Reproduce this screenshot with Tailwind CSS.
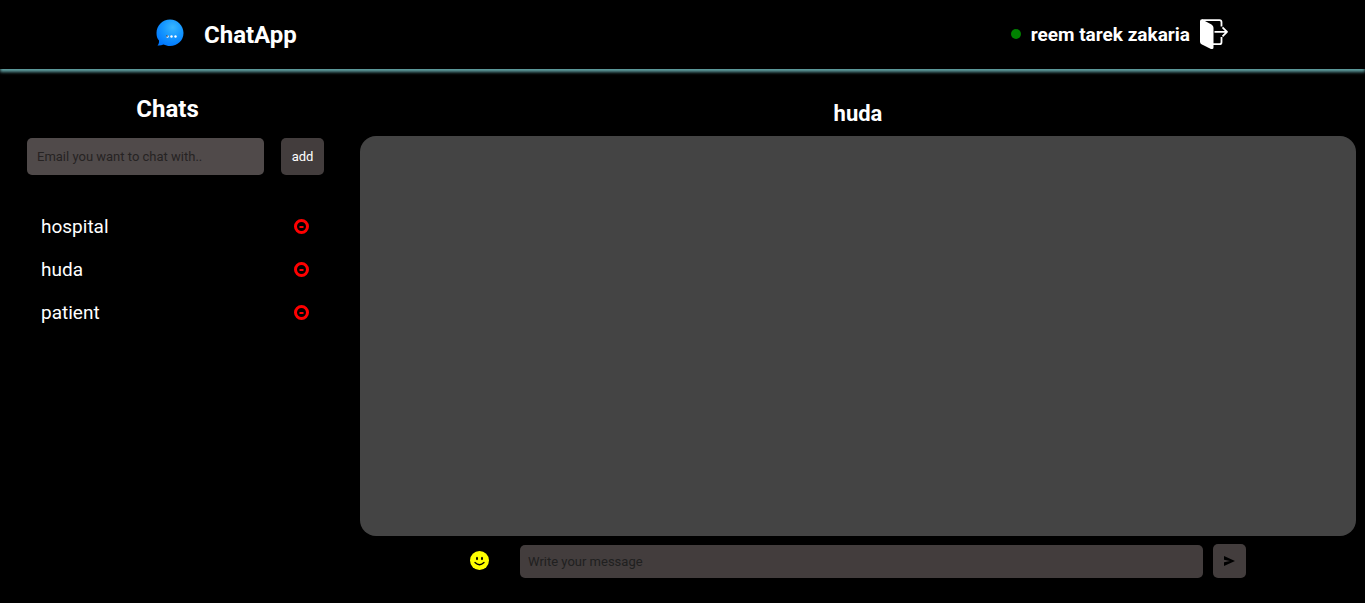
<!DOCTYPE html>
<html lang="en">
<head>
<meta charset="utf-8">
<meta name="viewport" content="width=device-width, initial-scale=1">
<title>ChatApp</title>
<script src="https://cdn.jsdelivr.net/npm/@tailwindcss/browser@4"></script>
</head>
<body class="flex min-h-screen flex-col bg-black font-[Roboto,sans-serif] text-white">
<header class="flex h-[69px] shrink-0 items-center justify-between pr-[137px] pl-[156px] shadow-[0_3px_3px_#5f9ea0]">
  <a href="#" class="flex items-center gap-5">
    <svg class="mb-1 size-7" viewBox="0 0 28 28" aria-hidden="true">
      <defs><radialGradient id="bubble" cx=".6" cy=".3" r=".75"><stop offset="0" stop-color="#38b6ff"/><stop offset=".5" stop-color="#1496ff"/><stop offset="1" stop-color="#0077ff"/></radialGradient></defs>
      <path fill="url(#bubble)" d="M14 .5C21.500 .5 27.500 6.500 27.500 14S21.500 27 14 27c-2.500 0-4.500-.6-6.500-1.500-1.700.8-3.700 1.200-6 1 1.200-1.200 1.700-3 1.500-5C1.200 19.500.5 17 .5 14 .5 6.500 6.500.5 14 .5Z"/>
      <g fill="#fff"><circle cx="11.500" cy="17.500" r="1.200"/><circle cx="15.500" cy="17.500" r="1.200"/><circle cx="19.500" cy="17.500" r="1.200"/></g><circle cx="11" cy="17" r=".8" fill="#012"/>
    </svg>
    <span class="text-2xl font-bold">ChatApp</span>
  </a>
  <div class="flex items-center">
    <span class="mr-[10px] mb-px size-[10px] rounded-full bg-[#008000]"></span>
    <span class="mr-[10px] text-[19px] leading-[30px] font-bold">reem tarek zakaria</span>
    <button type="button" aria-label="Log out" class="mb-px">
      <svg class="h-[31px] w-7" viewBox="0 0 28 31" fill="none" stroke="#fff" stroke-width="1.800" stroke-linejoin="round" aria-hidden="true">
        <path d="M2 1.200h17.500q2 0 2 2v4.300M21.500 18v5.200q0 2-2 2H13"/>
        <path d="M14.500 12.800H27M22.500 8.300l4.500 4.500-4.500 4.500"/>
        <path fill="#fff" stroke="none" d="M0 2.300Q0 .3 2 .3L4.500 1.700 11.500 5.500Q13.500 6.700 13.500 8.700V28.500Q13.500 30.700 11 29.900L1.500 25.200Q0 24.200 0 22.700Z"/>
      </svg>
    </button>
  </div>
</header>
<main class="flex flex-1">
  <aside class="w-[335px] shrink-0 pt-6 pr-[11px] pl-[27px]">
    <h1 class="mr-4 text-center text-2xl font-bold">Chats</h1>
    <form class="mt-[13px] flex gap-[17px]">
      <input type="email" aria-label="Email you want to chat with" placeholder="Email you want to chat with.." class="h-[37px] min-w-0 flex-1 rounded-[5px] bg-[#504a4a] px-[10px] text-[13px] outline-none placeholder:text-[#262323]">
      <button type="button" class="h-[37px] w-[43px] rounded-[5px] bg-[#433d3d] text-[13px]">add</button>
    </form>
    <ul class="mt-[30px] pr-[15px] pl-[14px] text-[19px] leading-[31px]">
      <li class="flex h-[43px] items-center justify-between"><a href="#">hospital</a><button type="button" aria-label="Remove hospital"><svg class="size-[15px]" viewBox="0 0 15 15" aria-hidden="true"><circle cx="7.500" cy="7.500" r="6" fill="none" stroke="red" stroke-width="3"/><path stroke="red" stroke-width="2" d="M5.500 8h4"/></svg></button></li>
      <li class="flex h-[43px] items-center justify-between"><a href="#">huda</a><button type="button" aria-label="Remove huda"><svg class="size-[15px]" viewBox="0 0 15 15" aria-hidden="true"><circle cx="7.500" cy="7.500" r="6" fill="none" stroke="red" stroke-width="3"/><path stroke="red" stroke-width="2" d="M5.500 8h4"/></svg></button></li>
      <li class="flex h-[43px] items-center justify-between"><a href="#">patient</a><button type="button" aria-label="Remove patient"><svg class="size-[15px]" viewBox="0 0 15 15" aria-hidden="true"><circle cx="7.500" cy="7.500" r="6" fill="none" stroke="red" stroke-width="3"/><path stroke="red" stroke-width="2" d="M5.500 8h4"/></svg></button></li>
    </ul>
  </aside>
  <section class="flex min-w-0 flex-1 flex-col pt-[30px] pr-[9px] pb-[25px] pl-[25px]">
    <h2 class="text-center text-[22px] leading-[30px] font-bold">huda</h2>
    <div class="mt-[7px] min-h-[300px] flex-1 rounded-[16px] bg-[#444]"></div>
    <form class="mt-2 flex items-center px-[110px]">
      <button type="button" aria-label="Choose an emoji" class="mr-[31px] mb-0.5">
        <svg class="size-[19px]" viewBox="0 0 19 19" aria-hidden="true"><circle cx="9.500" cy="9.500" r="9.500" fill="#ff0"/><g fill="#000"><ellipse cx="7" cy="7.500" rx="1" ry="1.700"/><ellipse cx="12" cy="7.500" rx="1" ry="1.700"/></g><path d="M5 11.500q4.500 4.500 9 0" fill="none" stroke="#000" stroke-width="1.300" stroke-linecap="round"/></svg>
      </button>
      <input type="text" aria-label="Write your message" placeholder="Write your message" class="h-[33px] min-w-0 flex-1 rounded-[5px] bg-[#433d3d] px-2 text-[13px] outline-none placeholder:text-[#202020]">
      <button type="button" aria-label="Send" class="ml-[10px] flex h-[34px] w-[33px] items-center justify-center rounded-[5px] bg-[#433d3d]">
        <svg class="h-[10px] w-[11px]" viewBox="0 0 11 10" aria-hidden="true"><path d="M0 0 11 5 0 10V6.200L6 5 0 3.800Z"/></svg>
      </button>
    </form>
  </section>
</main>
</body>
</html>
